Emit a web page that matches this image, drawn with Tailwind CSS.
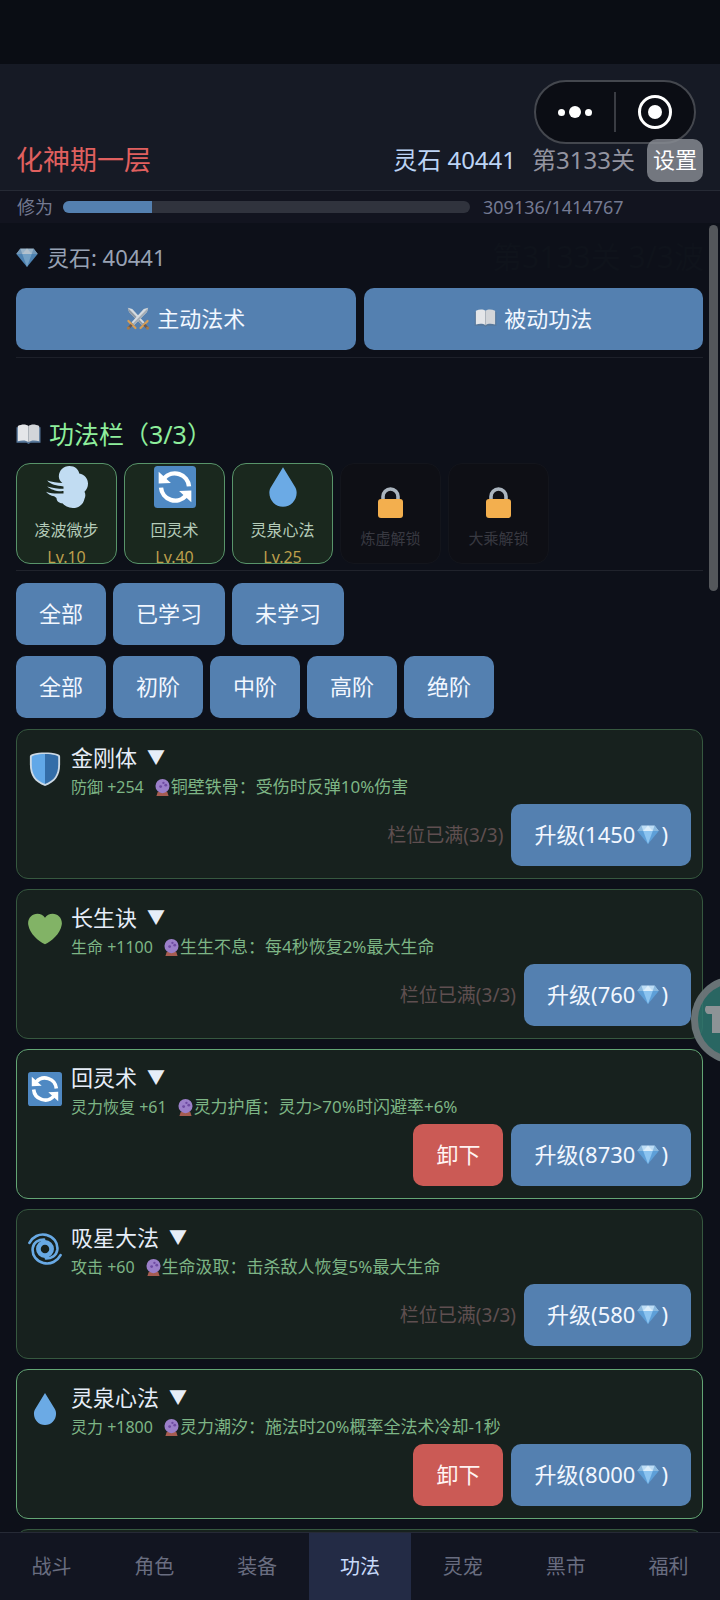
<!DOCTYPE html>
<html lang="zh-CN">
<head>
<meta charset="utf-8">
<meta name="viewport" content="width=device-width, initial-scale=1">
<title>功法</title>
<script src="https://cdn.jsdelivr.net/npm/@tailwindcss/browser@4"></script>
</head>
<body class="flex h-screen flex-col overflow-hidden bg-[#0d1019] font-['Noto_Sans','Noto_Sans_CJK_SC',sans-serif] text-[22px] text-[#e6edf8]">

<!-- Shared icon shapes -->
<svg class="hidden" aria-hidden="true">
  <symbol id="gem" viewBox="0 0 36 32">
    <path fill="#bdddf5" d="M7 1h22l7 9H0z"/><path fill="#5d9fd8" d="M0 10h36L18 32z"/>
    <path fill="#8cc4f0" d="M10 10h16l-8 22z"/><path fill="#8ab9df" d="M7 1l3 9H0zM29 1l-3 9h10z"/>
    <path fill="#dceefb" d="M10 10l8-9 8 9z"/>
  </symbol>
  <symbol id="swords" viewBox="0 0 36 36">
    <path fill="#d5dbe0" d="M2 1l7 2 19 21-4 4L4 8z"/><path fill="#8f9aa5" d="M2 1l24 25-2 2L4 8z"/>
    <path fill="#d5dbe0" d="M34 1l-7 2L8 24l4 4L32 8z"/><path fill="#a3adb6" d="M34 1L10 26l2 2L32 8z"/>
    <path stroke="#d99e54" stroke-width="3.5" stroke-linecap="round" d="M3 22l11 11M33 22L22 33"/>
    <path stroke="#6c5a50" stroke-width="4" d="M8 28l-5 5M28 28l5 5"/>
    <circle cx="3" cy="33" r="2.5" fill="#a87a48"/><circle cx="33" cy="33" r="2.5" fill="#a87a48"/>
  </symbol>
  <symbol id="book" viewBox="0 0 36 30">
    <path fill="#56779a" d="M0 5h36v23H21l-3 2-3-2H0z"/>
    <path fill="#e4e6e9" d="M2 3c6-3 12-3 16 0v24c-4-3-10-3-16-1z"/>
    <path fill="#d2d5d9" d="M34 3c-6-3-12-3-16 0v24c4-3 10-3 16-1z"/>
    <path stroke="#a9aeb5" stroke-width="1.2" d="M18 3v24"/>
  </symbol>
  <symbol id="dash" viewBox="0 0 36 36">
    <path fill="#c1dcf2" d="M11 9C11 4 15 0 20 0c5 0 8 3 8.500 6.500C33 7 36 11 36 15c0 3-1 5-3 7 1 2 1 4 0 6-1 5-5 8-10 8-4 0-7-2-9-4-3 0-5-2-5-4.500L7 26C4 25.500 2 24 0 22c5 2 10 1.500 15 1.500v-2C9 22 4 20 1 17.500c5 1.500 9 2 14 2v-2C9 17 4 16 1 12.500c4 1.500 9 2 13 2-2-1.500-3-3.500-3-5.500z"/>
  </symbol>
  <symbol id="cycle" viewBox="0 0 36 36">
    <rect width="36" height="36" rx="3" fill="#4f89c3"/>
    <g fill="none" stroke="#fff" stroke-width="3.800"><path d="M8.700 10.500A12.200 12.200 0 0 1 30 17.500"/><path d="M27.300 25.500A12.200 12.200 0 0 1 6 18.500"/></g>
    <path fill="#fff" d="M4 5l10.500 9.500L4 15zM32 31l-10.500-9.500L32 21z"/>
  </symbol>
  <symbol id="drop" viewBox="0 0 36 36">
    <path fill="#6baae5" d="M18 1L8 17.600C6.800 19.400 6.300 21 6.300 23 6.300 29.700 11.500 35 18 35s11.700-5.300 11.700-12c0-2-.5-3.600-1.600-5.400z"/>
  </symbol>
  <symbol id="lock" viewBox="0 0 25 31">
    <path fill="none" stroke="#aab4be" stroke-width="3.600" d="M5 14V9.500a7.500 7.500 0 0 1 15 0V14"/>
    <rect y="12" width="25" height="19" rx="3" fill="#f3af4e"/>
  </symbol>
  <symbol id="shield" viewBox="0 0 36 36">
    <path fill="#ccd9e5" d="M18 36C7 32 2 25 2 13V5c0-2 1-2.500 3-3 8-2 18-2 26 0 2 .5 3 1 3 3v8c0 12-5 19-16 23z"/>
    <path fill="#61a8e8" d="M18 34C8 30 4 24 4 13V5c0-1 5-3 14-3z"/><path fill="#336da8" d="M18 34c10-4 14-10 14-21V5c0-1-5-3-14-3z"/>
  </symbol>
  <symbol id="heart" viewBox="0 0 36 36">
    <path fill="#82b366" d="M35.885 11.833c0-5.450-4.418-9.868-9.867-9.868-3.308 0-6.227 1.633-8.018 4.129-1.791-2.496-4.710-4.129-8.017-4.129-5.450 0-9.868 4.417-9.868 9.868 0 .772.098 1.520.266 2.241C1.751 22.587 11.216 31.568 18 34.034c6.783-2.466 16.249-11.447 17.617-19.959.17-.721.268-1.469.268-2.242z"/>
  </symbol>
  <symbol id="cyclone" viewBox="0 0 36 36">
    <g fill="none" stroke="#68a9e4" stroke-linecap="round">
      <circle cx="18" cy="18" r="7" stroke-width="5"/>
      <path stroke-width="2.800" d="M1.500 11.500C5 5 12 1.500 19 3c8 2 13 8 12 16-1 6-6 9-12 9"/>
      <path stroke-width="2.800" d="M34.500 24.500C31 31 24 34.500 17 33 9 31 4 25 5 17c1-6 6-9 12-9"/>
    </g>
  </symbol>
  <symbol id="orb" viewBox="0 0 32 36">
    <path fill="#a65c50" d="M6 27h20l3 9H3z"/><circle cx="16" cy="15" r="15" fill="#9b7fc9"/>
    <circle cx="18" cy="8" r="2.500" fill="#6e4ba3"/><circle cx="23" cy="13" r="3" fill="#6e4ba3"/><circle cx="12" cy="16" r="3" fill="#6e4ba3"/>
  </symbol>
</svg>

<div class="h-16 shrink-0 bg-[#0a0d14]"></div>

<header class="relative shrink-0 bg-[#161a25]">
  <div class="flex items-center border-b border-[#262a35] pt-[75px] pr-[17px] pb-2 pl-4">
    <h1 class="flex-1 pb-[2px] text-[27px] leading-[36px] text-[#e0605f]">化神期一层</h1>
    <span class="pb-[2px] text-[24px] leading-[36px] text-[#bcd4f5]">灵石 40441</span>
    <span class="ml-4 pb-[2px] text-[24px] leading-[36px] text-[#9394a0]">第3133关</span>
    <button class="relative z-10 ml-3 h-[43px] rounded-[10px] bg-[#8b8e96]/80 px-[6px] pb-[2px] text-white">设置</button>
  </div>
  <!-- Mini-program capsule -->
  <div class="absolute top-4 right-6 flex h-16 w-[162px] items-center rounded-full border-2 border-[#44474e] bg-[#0b0d14]">
    <button class="flex flex-1 items-center justify-center gap-1" aria-label="更多">
      <span class="size-[7px] rounded-full bg-white"></span><span class="size-3 rounded-full bg-white"></span><span class="size-[7px] rounded-full bg-white"></span>
    </button>
    <span class="h-10 w-[2px] bg-[#3a3c43]"></span>
    <button class="flex flex-1 items-center justify-center" aria-label="关闭">
      <span class="flex size-[34px] items-center justify-center rounded-full border-[3px] border-white"><span class="size-[14px] rounded-full bg-white"></span></span>
    </button>
  </div>
  <div class="flex items-center bg-[#12141f] py-[6px] pl-[17px] text-[18px] leading-5 text-[#747a92]">
    <span>修为</span>
    <div class="ml-[10px] h-3 flex-1 overflow-hidden rounded-full bg-[#30333d]" role="progressbar" aria-label="修为" aria-valuemin="0" aria-valuemax="1414767" aria-valuenow="309136">
      <div class="h-full bg-[#5480b0]" style="width:21.85%"></div>
    </div>
    <span class="ml-[13px] w-[237px]">309136/1414767</span>
  </div>
</header>

<main class="relative min-h-0 flex-1 overflow-hidden pt-5 pr-[17px] pl-4">
  <p class="absolute top-4 right-4 text-[30px] leading-9 text-[#0f131b]" aria-hidden="true">第3133关 3/3波</p>
  <div class="absolute top-[2px] right-[2px] h-[366px] w-[9px] rounded-full bg-[#54575b]"></div>

  <p class="relative flex items-center gap-[9px] leading-7 text-[#98a2b4]"><svg class="h-[19px] w-[22px] opacity-80"><use href="#gem"/></svg>灵石: 40441</p>

  <div class="relative mt-[17px] flex gap-2 border-b border-[#1d2029] pb-[7px] text-[#f2f7ff]">
    <button class="flex h-[62px] flex-1 items-center justify-center gap-[7px] rounded-[10px] bg-[#5480b0] pb-[2px]"><svg class="h-[23px] w-6"><use href="#swords"/></svg>主动法术</button>
    <button class="flex h-[62px] flex-1 items-center justify-center gap-[7px] rounded-[10px] bg-[#5480b0] pb-[2px]"><svg class="h-[18px] w-[23px]"><use href="#book"/></svg>被动功法</button>
  </div>

  <h2 class="mt-[60px] flex items-center gap-2 text-[25px] leading-8 text-[#8eee9c]"><svg class="h-5 w-[25px]"><use href="#book"/></svg>功法栏（3/3）</h2>

  <div class="mt-[13px] flex gap-[7px] border-b border-[#20232c] pb-[6px] text-[16px]">
    <button class="flex h-[101px] w-[101px] flex-col items-center rounded-[14px] border border-[#58946a] bg-[#1a281e] pt-[2px]"><svg class="size-[42px] shrink-0"><use href="#dash"/></svg><span class="mt-[10px] shrink-0 leading-6 text-[#b4cbb8]">凌波微步</span><span class="mt-[7px] shrink-0 leading-4 text-[#bd9f4c]">Lv.10</span></button>
    <button class="flex h-[101px] w-[101px] flex-col items-center rounded-[14px] border border-[#58946a] bg-[#1a281e] pt-[2px]"><svg class="size-[42px] shrink-0"><use href="#cycle"/></svg><span class="mt-[10px] shrink-0 leading-6 text-[#b4cbb8]">回灵术</span><span class="mt-[7px] shrink-0 leading-4 text-[#bd9f4c]">Lv.40</span></button>
    <button class="flex h-[101px] w-[101px] flex-col items-center rounded-[14px] border border-[#58946a] bg-[#1a281e] pt-[2px]"><svg class="size-[42px] shrink-0"><use href="#drop"/></svg><span class="mt-[10px] shrink-0 leading-6 text-[#b4cbb8]">灵泉心法</span><span class="mt-[7px] shrink-0 leading-4 text-[#bd9f4c]">Lv.25</span></button>
    <button disabled class="flex h-[101px] w-[101px] flex-col items-center rounded-[14px] border border-[#13151c] bg-[#0e0f15] pt-[23px]"><svg class="h-[31px] w-[25px]"><use href="#lock"/></svg><span class="mt-2 text-[15px] leading-6 text-[#383941]">炼虚解锁</span></button>
    <button disabled class="flex h-[101px] w-[101px] flex-col items-center rounded-[14px] border border-[#13151c] bg-[#0e0f15] pt-[23px]"><svg class="h-[31px] w-[25px]"><use href="#lock"/></svg><span class="mt-2 text-[15px] leading-6 text-[#383941]">大乘解锁</span></button>
  </div>

  <div class="mt-3 flex gap-[7px] text-[#f2f7ff]">
    <button class="h-[62px] rounded-[10px] bg-[#5480b0] px-[23px] pb-[2px]">全部</button>
    <button class="h-[62px] rounded-[10px] bg-[#5480b0] px-[23px] pb-[2px]">已学习</button>
    <button class="h-[62px] rounded-[10px] bg-[#5480b0] px-[23px] pb-[2px]">未学习</button>
  </div>
  <div class="mt-[11px] flex gap-[7px] text-[#f2f7ff]">
    <button class="h-[62px] rounded-[10px] bg-[#5480b0] px-[23px] pb-[2px]">全部</button>
    <button class="h-[62px] rounded-[10px] bg-[#5480b0] px-[23px] pb-[2px]">初阶</button>
    <button class="h-[62px] rounded-[10px] bg-[#5480b0] px-[23px] pb-[2px]">中阶</button>
    <button class="h-[62px] rounded-[10px] bg-[#5480b0] px-[23px] pb-[2px]">高阶</button>
    <button class="h-[62px] rounded-[10px] bg-[#5480b0] px-[23px] pb-[2px]">绝阶</button>
  </div>

  <div class="mt-[11px] flex flex-col gap-[10px]">
    <article class="rounded-xl border border-[#36583f] bg-[#17211e] px-[11px] py-3">
      <div class="flex gap-[9px]">
        <svg class="mt-[10px] size-[34px] shrink-0"><use href="#shield"/></svg>
        <div>
          <button class="flex items-center gap-[10px] leading-[30px]" aria-expanded="false">金刚体<span class="text-[18px]">▼</span></button>
          <p class="mt-[3px] flex items-center text-[16px] leading-6 text-[#7db585]">防御 +254<svg class="mr-px ml-[11px] h-[17px] w-[15px]"><use href="#orb"/></svg><span class="text-[17px]">铜壁铁骨：受伤时反弹10%伤害</span></p>
        </div>
      </div>
      <div class="mt-[5px] flex items-center justify-end gap-2">
        <span class="text-[19px] text-[#5f4f50]">栏位已满(3/3)</span>
        <button class="flex h-[62px] items-center rounded-[10px] bg-[#5480b0] px-[23px] pb-[2px] text-[#f2f7ff]">升级(1450<svg class="mx-[2px] h-[19px] w-[22px]"><use href="#gem"/></svg>)</button>
      </div>
    </article>

    <article class="rounded-xl border border-[#36583f] bg-[#17211e] px-[11px] py-3">
      <div class="flex gap-[9px]">
        <svg class="mt-[10px] size-[34px] shrink-0"><use href="#heart"/></svg>
        <div>
          <button class="flex items-center gap-[10px] leading-[30px]" aria-expanded="false">长生诀<span class="text-[18px]">▼</span></button>
          <p class="mt-[3px] flex items-center text-[16px] leading-6 text-[#7db585]">生命 +1100<svg class="mr-px ml-[11px] h-[17px] w-[15px]"><use href="#orb"/></svg><span class="text-[17px]">生生不息：每4秒恢复2%最大生命</span></p>
        </div>
      </div>
      <div class="mt-[5px] flex items-center justify-end gap-2">
        <span class="text-[19px] text-[#5f4f50]">栏位已满(3/3)</span>
        <button class="flex h-[62px] items-center rounded-[10px] bg-[#5480b0] px-[23px] pb-[2px] text-[#f2f7ff]">升级(760<svg class="mx-[2px] h-[19px] w-[22px]"><use href="#gem"/></svg>)</button>
      </div>
    </article>

    <article class="rounded-xl border border-[#63a574] bg-[#17211e] px-[11px] py-3">
      <div class="flex gap-[9px]">
        <svg class="mt-[10px] size-[34px] shrink-0"><use href="#cycle"/></svg>
        <div>
          <button class="flex items-center gap-[10px] leading-[30px]" aria-expanded="false">回灵术<span class="text-[18px]">▼</span></button>
          <p class="mt-[3px] flex items-center text-[16px] leading-6 text-[#7db585]">灵力恢复 +61<svg class="mr-px ml-[11px] h-[17px] w-[15px]"><use href="#orb"/></svg><span class="text-[17px]">灵力护盾：灵力&gt;70%时闪避率+6%</span></p>
        </div>
      </div>
      <div class="mt-[5px] flex items-center justify-end gap-2">
        <button class="h-[62px] rounded-[10px] bg-[#cb5a55] px-[23px] pb-[2px] text-[#fff3f2]">卸下</button>
        <button class="flex h-[62px] items-center rounded-[10px] bg-[#5480b0] px-[23px] pb-[2px] text-[#f2f7ff]">升级(8730<svg class="mx-[2px] h-[19px] w-[22px]"><use href="#gem"/></svg>)</button>
      </div>
    </article>

    <article class="rounded-xl border border-[#36583f] bg-[#17211e] px-[11px] py-3">
      <div class="flex gap-[9px]">
        <svg class="mt-[10px] size-[34px] shrink-0"><use href="#cyclone"/></svg>
        <div>
          <button class="flex items-center gap-[10px] leading-[30px]" aria-expanded="false">吸星大法<span class="text-[18px]">▼</span></button>
          <p class="mt-[3px] flex items-center text-[16px] leading-6 text-[#7db585]">攻击 +60<svg class="mr-px ml-[11px] h-[17px] w-[15px]"><use href="#orb"/></svg><span class="text-[17px]">生命汲取：击杀敌人恢复5%最大生命</span></p>
        </div>
      </div>
      <div class="mt-[5px] flex items-center justify-end gap-2">
        <span class="text-[19px] text-[#5f4f50]">栏位已满(3/3)</span>
        <button class="flex h-[62px] items-center rounded-[10px] bg-[#5480b0] px-[23px] pb-[2px] text-[#f2f7ff]">升级(580<svg class="mx-[2px] h-[19px] w-[22px]"><use href="#gem"/></svg>)</button>
      </div>
    </article>

    <article class="rounded-xl border border-[#63a574] bg-[#17211e] px-[11px] py-3">
      <div class="flex gap-[9px]">
        <svg class="mt-[10px] size-[34px] shrink-0"><use href="#drop"/></svg>
        <div>
          <button class="flex items-center gap-[10px] leading-[30px]" aria-expanded="false">灵泉心法<span class="text-[18px]">▼</span></button>
          <p class="mt-[3px] flex items-center text-[16px] leading-6 text-[#7db585]">灵力 +1800<svg class="mr-px ml-[11px] h-[17px] w-[15px]"><use href="#orb"/></svg><span class="text-[17px]">灵力潮汐：施法时20%概率全法术冷却-1秒</span></p>
        </div>
      </div>
      <div class="mt-[5px] flex items-center justify-end gap-2">
        <button class="h-[62px] rounded-[10px] bg-[#cb5a55] px-[23px] pb-[2px] text-[#fff3f2]">卸下</button>
        <button class="flex h-[62px] items-center rounded-[10px] bg-[#5480b0] px-[23px] pb-[2px] text-[#f2f7ff]">升级(8000<svg class="mx-[2px] h-[19px] w-[22px]"><use href="#gem"/></svg>)</button>
      </div>
    </article>

    <div class="h-[150px] rounded-xl border border-[#36583f] bg-[#17211e]"></div>
  </div>

  <!-- Floating assistant bubble, docked past the right edge -->
  <button class="absolute top-[753px] -right-[59px] size-[88px] rounded-full border-[7px] border-[#74767a]/85 bg-[#2f7570]/85" aria-label="悬浮球">
    <svg class="absolute top-[23px] left-[6px] h-[27px] w-[30px]" viewBox="0 0 30 27"><path fill="#8d9396" d="M2 0h28v8H18v19H8V8H4C1 7 0 3 2 0z"/></svg>
  </button>
</main>

<nav class="grid h-[68px] shrink-0 grid-cols-7 border-t border-[#262a36] bg-[#121521] text-center text-[20px] text-[#696d80]">
  <a href="#" class="flex items-center justify-center">战斗</a>
  <a href="#" class="flex items-center justify-center">角色</a>
  <a href="#" class="flex items-center justify-center">装备</a>
  <a href="#" class="flex items-center justify-center bg-[#232b45] text-[#c8dafa]" aria-current="page">功法</a>
  <a href="#" class="flex items-center justify-center">灵宠</a>
  <a href="#" class="flex items-center justify-center">黑市</a>
  <a href="#" class="flex items-center justify-center">福利</a>
</nav>
</body>
</html>
